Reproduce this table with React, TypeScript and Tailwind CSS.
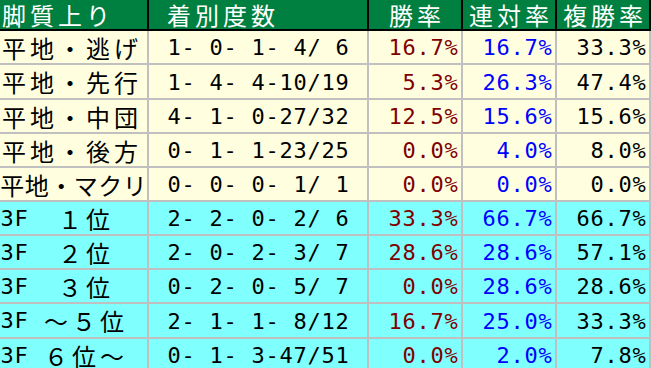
import React from "react";

type Row = {
  name: string;
  rec: string;
  w: string;
  r: string;
  f: string;
  cyan: boolean;
  h: string;
};

const rows: Row[] = [
  { name: "平地・逃げ", rec: "1- 0- 1- 4/ 6", w: "16.7%", r: "16.7%", f: "33.3%", cyan: false, h: "h-[34px]" },
  { name: "平地・先行", rec: "1- 4- 4-10/19", w: "5.3%", r: "26.3%", f: "47.4%", cyan: false, h: "h-[35px]" },
  { name: "平地・中団", rec: "4- 1- 0-27/32", w: "12.5%", r: "15.6%", f: "15.6%", cyan: false, h: "h-[34px]" },
  { name: "平地・後方", rec: "0- 1- 1-23/25", w: "0.0%", r: "4.0%", f: "8.0%", cyan: false, h: "h-[34px]" },
  { name: "平地・マクリ", rec: "0- 0- 0- 1/ 1", w: "0.0%", r: "0.0%", f: "0.0%", cyan: false, h: "h-[34px]" },
  { name: "3F  １位", rec: "2- 2- 0- 2/ 6", w: "33.3%", r: "66.7%", f: "66.7%", cyan: true, h: "h-[34px]" },
  { name: "3F  ２位", rec: "2- 0- 2- 3/ 7", w: "28.6%", r: "28.6%", f: "57.1%", cyan: true, h: "h-[34px]" },
  { name: "3F  ３位", rec: "0- 2- 0- 5/ 7", w: "0.0%", r: "28.6%", f: "28.6%", cyan: true, h: "h-[34px]" },
  { name: "3F ～５位", rec: "2- 1- 1- 8/12", w: "16.7%", r: "25.0%", f: "33.3%", cyan: true, h: "h-[35px]" },
  { name: "3F ６位～", rec: "0- 1- 3-47/51", w: "0.0%", r: "2.0%", f: "7.8%", cyan: true, h: "h-[34px]" },
];

function Mono({ text }: { text: string }) {
  return (
    <>
      {Array.from(text).map((c, i) =>
        c.charCodeAt(0) > 0xff ? (
          <span
            key={i}
            className="inline-block w-[28px] text-center font-['Noto_Sans_CJK_JP',sans-serif] text-[24px] leading-[28px]"
          >
            {c}
          </span>
        ) : (
          <span
            key={i}
            className="inline-block w-[14px] text-center font-['DejaVu_Sans_Mono','Noto_Sans_CJK_JP',monospace] text-[22px] leading-[28px]"
          >
            {c === " " ? "\u00a0" : c}
          </span>
        )
      )}
    </>
  );
}

export default function App() {
  return (
    <div className="w-[651px] h-[368px] overflow-hidden bg-white">
      <div className="flex h-[31px] bg-[#008040] border-b-2 border-black text-white">
        <div className="w-[149px] border-r-2 border-black flex items-center">
          <Mono text="脚質上り" />
        </div>
        <div className="w-[220px] border-r-2 border-black flex items-center pl-[16px]">
          <Mono text="着別度数" />
        </div>
        <div className="w-[94px] border-r-2 border-black flex items-center justify-center">
          <Mono text="勝率" />
        </div>
        <div className="w-[94px] border-r-2 border-black flex items-center justify-center">
          <Mono text="連対率" />
        </div>
        <div className="w-[94px] border-r-2 border-black flex items-center justify-center">
          <Mono text="複勝率" />
        </div>
      </div>
      {rows.map((row, i) => (
        <div
          key={i}
          className={`flex ${row.h} border-b-2 border-[#c0c0c0] text-black ${row.cyan ? "bg-[#80ffff]" : "bg-[#ffffe0]"}`}
        >
          <div className="w-[149px] border-r-2 border-[#c0c0c0] flex items-center pt-[1px]">
            <Mono text={row.name} />
          </div>
          <div className="w-[220px] border-r-2 border-[#c0c0c0] flex items-center justify-center pt-[2px]">
            <Mono text={row.rec} />
          </div>
          <div className="w-[94px] border-r-2 border-[#c0c0c0] flex items-center justify-end pr-[3px] pt-[2px] text-[#800000]">
            <Mono text={row.w} />
          </div>
          <div className="w-[94px] border-r-2 border-[#c0c0c0] flex items-center justify-end pr-[3px] pt-[2px] text-[#0000ff]">
            <Mono text={row.r} />
          </div>
          <div className="w-[94px] border-r-2 border-[#c0c0c0] flex items-center justify-end pr-[3px] pt-[2px] text-black">
            <Mono text={row.f} />
          </div>
        </div>
      ))}
    </div>
  );
}
